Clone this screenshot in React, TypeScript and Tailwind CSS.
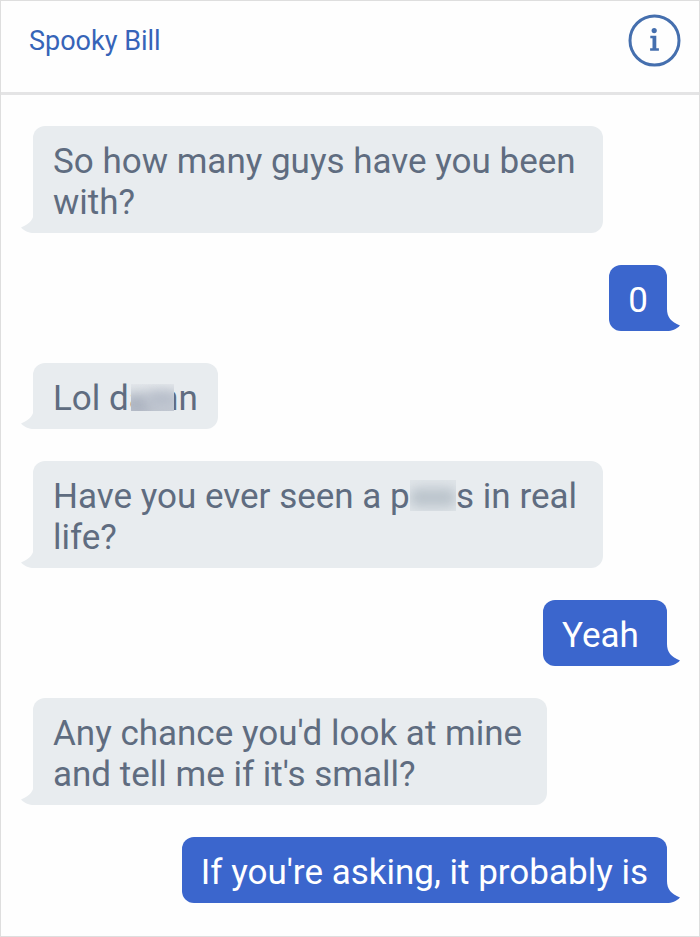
import { Fragment } from 'react';
import { clsx } from 'clsx';

interface Part {
  text: string;
  blur?: 'dark' | 'soft';
}

interface Message {
  id: number;
  from: 'them' | 'me';
  parts: Part[];
  size?: string;
}

const messages: Message[] = [
  { id: 1, from: 'them', parts: [{ text: 'So how many guys have you been with?' }] },
  { id: 2, from: 'me', parts: [{ text: '0' }] },
  { id: 3, from: 'them', parts: [{ text: 'Lol d' }, { text: 'am', blur: 'dark' }, { text: 'n' }] },
  {
    id: 4,
    from: 'them',
    parts: [{ text: 'Have you ever seen a p' }, { text: 'eni', blur: 'soft' }, { text: 's in real life?' }],
  },
  { id: 5, from: 'me', parts: [{ text: 'Yeah' }], size: 'min-w-[124px]' },
  {
    id: 6,
    from: 'them',
    parts: [{ text: "Any chance you'd look at mine and tell me if it's small?" }],
    size: 'max-w-[514px]',
  },
  { id: 7, from: 'me', parts: [{ text: "If you're asking, it probably is" }] },
];

function Blurred({ text, blur }: { text: string; blur: 'dark' | 'soft' }) {
  return (
    <span className="relative">
      {text}
      {blur === 'dark' ? (
        <span className="absolute top-1.5 right-1 bottom-2 left-0.5 overflow-hidden bg-linear-to-b from-[#e3e7eb] to-[#c3c9d2]">
          <span className="absolute -bottom-1 -left-2 h-5 w-7 rounded-full bg-[#adb4c1] blur-[6px]" />
          <span className="absolute -right-1 bottom-1 h-4 w-8 rounded-full bg-[#b6bdc9] blur-[6px]" />
        </span>
      ) : (
        <span className="absolute inset-x-0 top-1 bottom-1.5 overflow-hidden bg-[#e0e5e9]">
          <span className="absolute inset-x-0 top-2 bottom-1 rounded-md bg-[#bbc4cc] blur-[6px]" />
        </span>
      )}
    </span>
  );
}

function Tail({ mine }: { mine: boolean }) {
  return (
    <svg
      viewBox="0 0 26 24"
      aria-hidden="true"
      className={clsx(
        'absolute bottom-0 h-6 w-[26px]',
        mine ? '-right-[13px] fill-[#3b66cd]' : '-left-[12px] -scale-x-100 fill-[#e8ecef]',
      )}
    >
      <path d="M0 0H13V2C13 10 17 15 26 18.5C22 22.5 18 24 13 24H0Z" />
    </svg>
  );
}

function Bubble({ message }: { message: Message }) {
  const mine = message.from === 'me';
  return (
    <li
      className={clsx(
        'relative rounded-xl pt-[15px] pb-[10px] text-[35px] leading-[41px]',
        mine ? 'self-end bg-[#3b66cd] px-[19px] text-white' : 'self-start bg-[#e8ecef] px-5 text-[#5f6c80]',
        message.size ?? 'max-w-[570px]',
      )}
    >
      <Tail mine={mine} />
      <p className="relative">
        {message.parts.map((part, i) => (
          <Fragment key={i}>{part.blur ? <Blurred text={part.text} blur={part.blur} /> : part.text}</Fragment>
        ))}
      </p>
    </li>
  );
}

export default function App() {
  return (
    <div className="min-h-screen border border-[#dedede] bg-[#fefefe] font-[Roboto,sans-serif]">
      {/* Header */}
      <header className="flex items-start justify-between border-b-3 border-[#e4e4e5] pt-3 pr-[18px] pb-[25px] pl-7">
        <h1 className="pt-3 text-[27px] leading-8 text-[#3664b8]">Spooky Bill</h1>
        <button type="button" aria-label="Conversation info" className="cursor-pointer">
          <svg viewBox="0 0 54 54" className="size-[54px]" fill="none">
            <circle cx="27.5" cy="27.5" r="24.5" stroke="#456fae" strokeWidth="3" />
            <circle cx="27.2" cy="17.6" r="2.6" fill="#456fae" />
            <path d="M23.3 22.7H29.3V35.3H31.9V37.8H23.1V35.3H25.5V25.2H23.3Z" fill="#456fae" />
          </svg>
        </button>
      </header>

      {/* Messages */}
      <ul className="flex flex-col gap-8 px-8 pt-[31px] pb-[33px]">
        {messages.map((message) => (
          <Bubble key={message.id} message={message} />
        ))}
      </ul>
    </div>
  );
}
